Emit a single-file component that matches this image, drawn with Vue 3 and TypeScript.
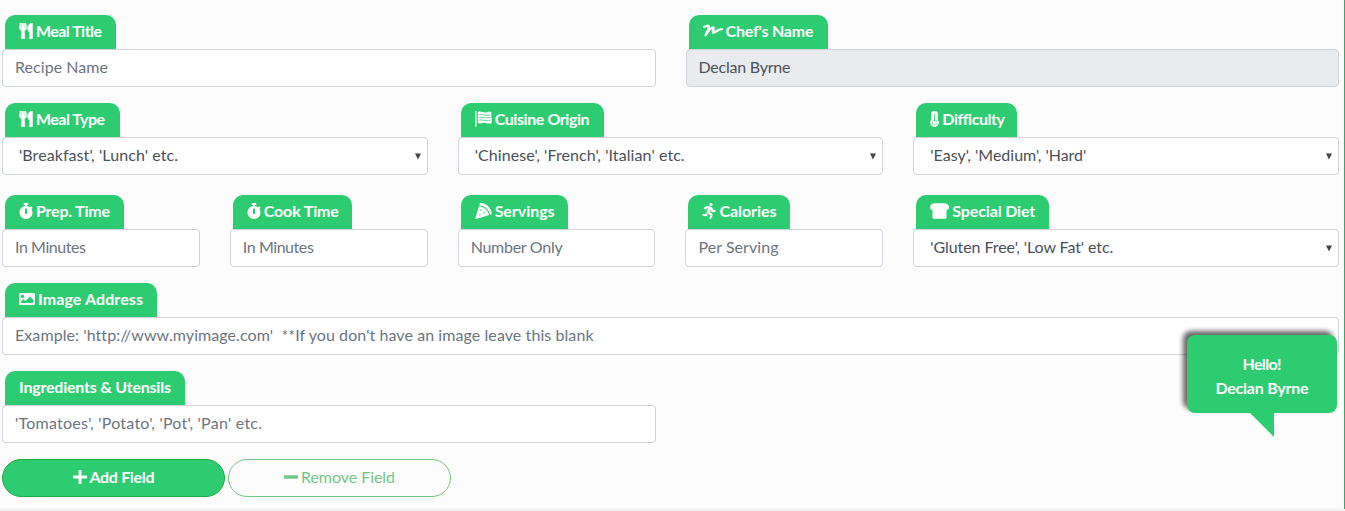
<script setup lang="ts">
import type { Directive } from 'vue'

interface Field {
  label: string
  icon?: string
  iconWidth?: number
  gap?: number
  labelWidth: number
  tab: number
  text: string
  textWidth: number
  kind?: 'input' | 'select' | 'disabled'
  span: number
}

const rows: Field[][] = [
  [
    { label: 'Meal Title', icon: 'utensils', iconWidth: 14, gap: 3, labelWidth: 66, tab: 111, text: 'Recipe Name', textWidth: 93, span: 3 },
    { label: "Chef's Name", icon: 'signature', iconWidth: 20, gap: 3, labelWidth: 88, tab: 139, text: 'Declan Byrne', textWidth: 92, kind: 'disabled', span: 3 },
  ],
  [
    { label: 'Meal Type', icon: 'utensils', iconWidth: 14, gap: 3, labelWidth: 69, tab: 115, text: "'Breakfast', 'Lunch' etc.", textWidth: 159, kind: 'select', span: 2 },
    { label: 'Cuisine Origin', icon: 'flag', iconWidth: 17, gap: 3, labelWidth: 95, tab: 143, text: "'Chinese', 'French', 'Italian' etc.", textWidth: 210, kind: 'select', span: 2 },
    { label: 'Difficulty', icon: 'thermometer', iconWidth: 9, gap: 3, labelWidth: 62, tab: 101, text: "'Easy', 'Medium', 'Hard'", textWidth: 156, kind: 'select', span: 2 },
  ],
  [
    { label: 'Prep. Time', icon: 'stopwatch', iconWidth: 14, gap: 3, labelWidth: 74, tab: 119, text: 'In Minutes', textWidth: 71, span: 1 },
    { label: 'Cook Time', icon: 'stopwatch', iconWidth: 14, gap: 3, labelWidth: 75, tab: 119, text: 'In Minutes', textWidth: 71, span: 1 },
    { label: 'Servings', icon: 'pizza', iconWidth: 17, gap: 3, labelWidth: 60, tab: 107, text: 'Number Only', textWidth: 92, span: 1 },
    { label: 'Calories', icon: 'runner', iconWidth: 14, gap: 3, labelWidth: 57, tab: 102, text: 'Per Serving', textWidth: 80, span: 1 },
    { label: 'Special Diet', icon: 'bread', iconWidth: 19, gap: 3, labelWidth: 83, tab: 133, text: "'Gluten Free', 'Low Fat' etc.", textWidth: 183, kind: 'select', span: 2 },
  ],
  [
    { label: 'Image Address', icon: 'image', iconWidth: 16, gap: 3, labelWidth: 105, tab: 152, text: "Example: 'http://www.myimage.com'\u00a0 **If you don't have an image leave this blank", textWidth: 578, span: 6 },
  ],
  [
    { label: 'Ingredients & Utensils', labelWidth: 152, tab: 180, text: "'Tomatoes', 'Potato', 'Pot', 'Pan' etc.", textWidth: 247, span: 3 },
  ],
]

// Tracks a run of text so that it fills the given width.
const vFit: Directive<HTMLElement, number> = {
  mounted(el, { value }) {
    const natural = el.getBoundingClientRect().width
    const count = (el.textContent ?? '').length
    const spacing = (value - natural) / (count - 1)
    el.style.letterSpacing = `${spacing}px`
    el.style.marginRight = `${-spacing}px`
  },
}
</script>

<template>
  <main class="page">
    <svg class="defs" aria-hidden="true">
      <symbol id="utensils" viewBox="0 0 416 512"><path stroke="currentColor" stroke-width="16" d="M207.9 15.2c.8 4.7 16.1 94.5 16.1 128.8 0 52.3-27.8 89.6-68.9 104.6L168 486.7c.7 13.7-10.2 25.3-24 25.3H80c-13.700 0-24.700-11.500-24-25.300l12.900-238.100C27.700 233.600 0 196.200 0 144 0 109.600 15.300 19.900 16.100 15.200 19.300-5.100 61.400-5.400 64 16.300v141.200c1.300 3.400 15.100 3.200 16 0 1.400-25.300 7.900-139.200 8-141.800 3.300-20.800 44.700-20.800 47.900 0 .2 2.700 6.600 116.500 8 141.800.9 3.200 14.800 3.400 16 0V16.300c2.600-21.600 44.800-21.400 48-1.100zm119.200 285.700l-15 185.100c-1.200 14 9.900 26 23.900 26h56c13.300 0 24-10.700 24-24V24c0-13.200-10.700-24-24-24-82.500 0-221.400 178.500-64.900 300.900z" /></symbol>
      <symbol id="stopwatch" viewBox="0 0 448 512"><path d="M432 304c0 114.9-93.1 208-208 208S16 418.9 16 304c0-104 76.3-190.2 176-205.5V64h-28c-6.6 0-12-5.4-12-12V12c0-6.6 5.4-12 12-12h120c6.6 0 12 5.4 12 12v40c0 6.6-5.4 12-12 12h-28v34.5c37.5 5.8 71.7 21.6 99.7 44.6l27.5-27.5c4.7-4.7 12.3-4.7 17 0l28.3 28.3c4.7 4.7 4.7 12.3 0 17l-30 30C419.7 223.3 432 262.2 432 304zm-176 36V188.5c0-6.6-5.4-12-12-12h-40c-6.6 0-12 5.4-12 12V340c0 6.6 5.4 12 12 12h40c6.6 0 12-5.4 12-12z" /></symbol>
      <symbol id="image" viewBox="0 0 512 512"><path d="M464 448H48c-26.500 0-48-21.500-48-48V112c0-26.500 21.500-48 48-48h416c26.500 0 48 21.500 48 48v288c0 26.500-21.500 48-48 48zM112 120c-31 0-56 25-56 56s25 56 56 56 56-25 56-56-25-56-56-56zM64 384h384V272l-87.500-87.500c-4.700-4.700-12.300-4.700-17 0L208 320l-55.500-55.500c-4.700-4.700-12.300-4.700-17 0L64 336v48z" /></symbol>
      <symbol id="runner" viewBox="0 0 416 512"><path stroke="currentColor" stroke-width="8" d="M272 96c26.510 0 48-21.490 48-48S298.510 0 272 0s-48 21.490-48 48 21.490 48 48 48zM113.690 317.470l-14.800 34.520H32c-17.670 0-32 14.330-32 32s14.330 32 32 32h77.450c19.250 0 36.580-11.440 44.110-29.090l8.790-20.520-10.670-6.300c-17.320-10.230-30.060-25.370-37.990-42.610zM384 223.990h-44.030l-26.060-53.250c-12.500-25.550-35.450-44.230-61.780-50.940l-71.080-21.140c-28.300-6.800-57.770-.55-80.840 17.140l-39.670 30.410c-14.030 10.750-16.690 30.830-5.920 44.860s30.840 16.660 44.860 5.920l39.690-30.410c7.670-5.890 17.440-8 25.270-6.140l14.700 4.370-37.460 87.390c-12.620 29.480-1.310 64.010 26.300 80.310l84.980 50.170-27.470 87.730c-5.280 16.860 4.110 34.820 20.970 40.090 3.190 1 6.410 1.480 9.580 1.480 13.610 0 26.230-8.770 30.520-22.450l31.640-101.060c5.910-20.770-2.890-43.080-21.640-54.390l-61.240-36.140 31.310-78.280 20.270 41.430c8 16.340 24.920 26.890 43.110 26.890H384c17.670 0 32-14.330 32-32s-14.330-31.990-32-31.990z" /></symbol>
      <symbol id="signature" viewBox="0 0 20 16"><path d="M1.200 3.800C2.800 2.800 5.500 2.200 5.800 3.600 6.200 5.500 4 9 2.600 12.200 5 8.500 8.200 4.300 10.200 4.400 11.700 4.600 8.800 9 10.200 9.700 11.800 10.200 14.500 6.300 18.800 6.200" fill="none" stroke="currentColor" stroke-width="2.300" stroke-linecap="round" stroke-linejoin="round" /></symbol>
      <symbol id="flag" viewBox="0 0 17 16"><path d="M.8.200v15.600" stroke="currentColor" stroke-width="1.500" /><path d="M2.800 1c3-1.500 6 1.200 9 .2 1.700-.6 3.300-.5 4.700-.2-.8 4 .8 7.300 0 11.200-3 1.200-6-.6-8.700-.3-2 .4-3.300.6-5 0z" /><path d="M3.500 3.800c3-1 6 1.200 12 0M3.500 6.500c3-1 6 1.200 12 0M3.500 9.200c3-1 6 1.200 12 0" fill="none" stroke="#2ecc71" stroke-width=".7" /></symbol>
      <symbol id="thermometer" viewBox="0 0 9 16"><path d="M1 3.200a3.500 3.200 0 0 1 7 0v6a4.300 4.200 0 1 1-7 0z" /><path d="M4.500 3v7" stroke="#2ecc71" stroke-width=".8" /><circle cx="4.500" cy="11.800" r="2.300" fill="none" stroke="#2ecc71" stroke-width=".5" /></symbol>
      <symbol id="pizza" viewBox="0 0 17 16"><path d="M5.300 0C11 0 16 4.500 16.800 10.500c.1 1-1.500 1.600-2 .6C13.600 6.300 10 3.100 5.300 2.500c-1.200-.3-1.200-2.300 0-2.500z" /><path d="M4 3.200C9.500 3.800 12.800 7 14 12L1.400 15.900c-.7.200-1.200-.2-1-.9z" /><g fill="#2ecc71"><circle cx="5.800" cy="7" r=".75" /><circle cx="9" cy="9.700" r=".75" /><circle cx="4.800" cy="11.800" r=".7" /></g></symbol>
      <symbol id="bread" viewBox="0 0 19 16"><path d="M5 .2h9c3 0 5 1.800 5 3.900 0 1.800-1 2.900-2.500 2.900v7.500c0 .8-.5 1.300-1.300 1.300H3.800c-.8 0-1.300-.5-1.300-1.300V7C1 7 0 5.900 0 4.100 0 2 2 .2 5 .2z" /></symbol>
      <symbol id="plus" viewBox="0 0 448 512"><path d="M416 208H272V64c0-17.700-14.300-32-32-32h-32c-17.700 0-32 14.300-32 32v144H32c-17.700 0-32 14.300-32 32v32c0 17.700 14.300 32 32 32h144v144c0 17.700 14.300 32 32 32h32c17.700 0 32-14.300 32-32V304h144c17.700 0 32-14.300 32-32v-32c0-17.700-14.300-32-32-32z" /></symbol>
      <symbol id="minus" viewBox="0 0 448 512"><rect y="200" width="448" height="112" rx="32" /></symbol>
    </svg>

    <form class="form">
      <div v-for="(row, r) in rows" :key="r" class="row">
        <div v-for="field in row" :key="field.label" class="field" :style="{ gridColumn: `span ${field.span}` }">
          <label class="tab" :style="{ width: `${field.tab}px` }">
            <svg v-if="field.icon" class="icon" :style="{ width: `${field.iconWidth}px`, marginRight: `${field.gap}px` }"><use :href="`#${field.icon}`" /></svg>
            <span v-fit="field.labelWidth">{{ field.label }}</span>
          </label>
          <div class="control" :class="field.kind">
            <span v-fit="field.textWidth">{{ field.text }}</span>
            <svg v-if="field.kind === 'select'" class="arrow" viewBox="0 0 6 7"><path d="M0 0.500h6L3 6.500z" /></svg>
          </div>
        </div>
      </div>
      <div class="actions">
        <button type="button" class="btn add"><svg class="icon"><use href="#plus" /></svg><span v-fit="65">Add Field</span></button>
        <button type="button" class="btn remove"><svg class="icon"><use href="#minus" /></svg><span v-fit="94">Remove Field</span></button>
      </div>
    </form>

    <aside class="bubble">
      <span v-fit="39">Hello!</span>
      <span v-fit="93">Declan Byrne</span>
    </aside>
  </main>
</template>

<style>
body { background: #f1f1f1; overflow: hidden; }
</style>

<style scoped>
.page {
  position: relative;
  box-sizing: border-box;
  width: 1345px;
  height: 509px;
  padding: 15px 5px 0 2px;
  border-right: 1px solid #36aa65;
  background: #fcfcfc;
  color: #495057;
  font: 16px/24px Lato, "Open Sans", sans-serif;
}
.defs { position: absolute; width: 0; height: 0; }
.row { display: grid; grid-template-columns: repeat(6, minmax(0, 1fr)); column-gap: 30px; margin-bottom: 16px; }
.row:nth-child(2) { margin-bottom: 20px; }
.tab {
  display: flex;
  align-items: center;
  box-sizing: border-box;
  height: 34px;
  margin-left: 3px;
  padding: 0 0 2px 14px;
  border-radius: 10px 10px 0 0;
  background: #2ecc71;
  color: #fff;
  font-weight: 700;
  white-space: pre;
}
.icon { flex: none; width: 14px; height: 16px; fill: currentColor; overflow: visible; }
.control {
  display: flex;
  align-items: center;
  box-sizing: border-box;
  height: 38px;
  padding: 0 12px 2px;
  border: 1px solid #ced4da;
  border-radius: 4px;
  background: #fff;
  color: #6c757d;
  white-space: pre;
}
.select { justify-content: space-between; padding: 0 6px 2px 16px; color: #495057; }
.disabled { background: #e9ecef; color: #495057; }
.arrow { width: 6px; height: 7px; margin-top: 2px; fill: #444; }
.actions { display: flex; gap: 3px; }
.btn {
  display: flex;
  align-items: center;
  justify-content: center;
  gap: 3px;
  box-sizing: border-box;
  width: 223px;
  height: 38px;
  padding: 0 0 2px;
  border: 1px solid #28a745;
  border-radius: 19px;
  font: inherit;
  white-space: pre;
}
.add { background: #2ecc71; color: #fff; font-weight: 700; }
.remove { border-color: #73c686; background: transparent; color: #73c686; }
.bubble {
  position: absolute;
  left: 1187px;
  top: 335px;
  display: flex;
  flex-direction: column;
  align-items: center;
  box-sizing: border-box;
  width: 150px;
  height: 78px;
  padding-top: 17px;
  border-radius: 8px;
  background: #2ecc71;
  box-shadow: -4px -4px 5px rgba(0, 0, 0, .6);
  color: #fff;
  font-weight: 700;
}
.bubble::after {
  content: "";
  position: absolute;
  left: 63px;
  top: 78px;
  border-top: 24px solid #2ecc71;
  border-left: 24px solid transparent;
}
</style>
